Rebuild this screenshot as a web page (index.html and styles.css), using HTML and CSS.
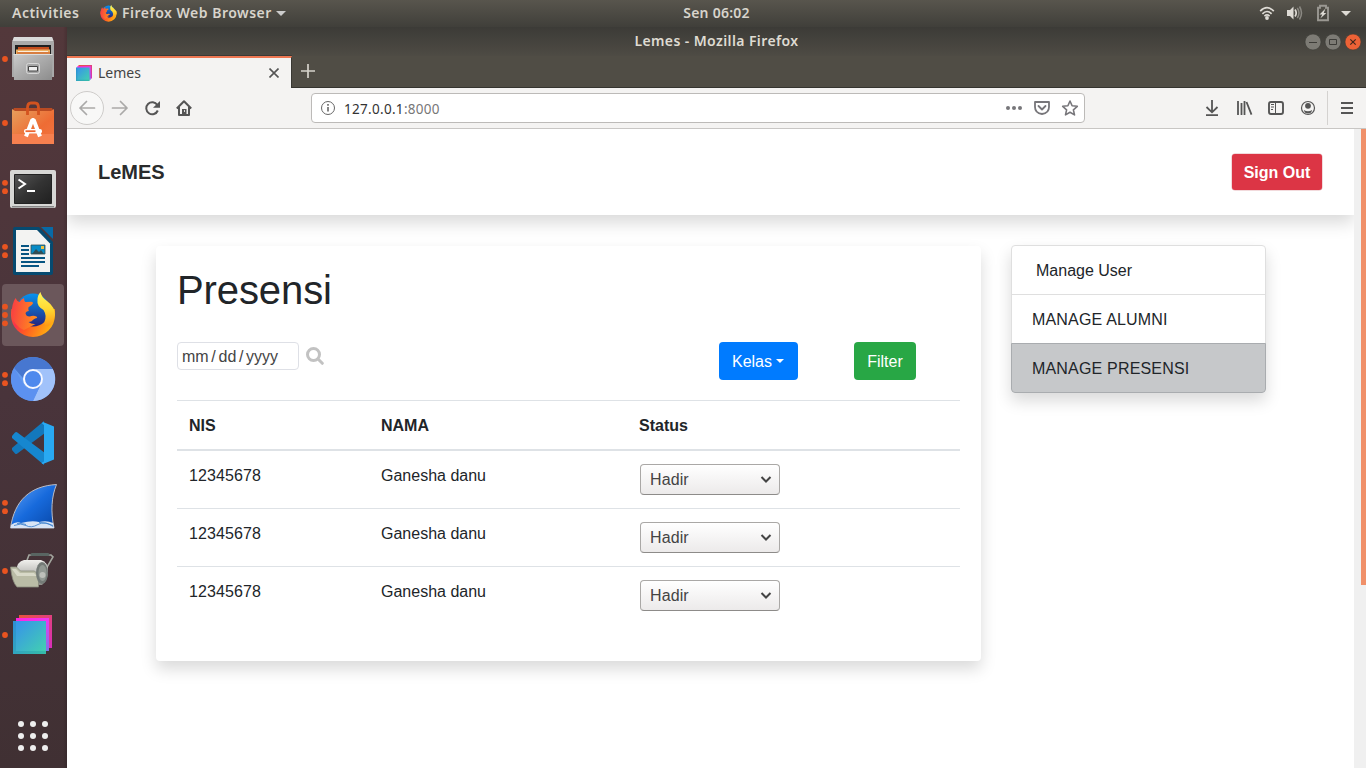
FILE: index.html
```html
<!DOCTYPE html>
<html lang="en">
<head>
<meta charset="utf-8">
<title>Lemes</title>
<link rel="stylesheet" href="styles.css">
</head>
<body>
<svg class="defs" width="0" height="0">
  <defs>
    <linearGradient id="blue" x2="1" y2="1"><stop offset="0" stop-color="#368fee"/><stop offset="1" stop-color="#43d3ad"/></linearGradient>
    <linearGradient id="pink" x2="1" y2="1"><stop offset="0" stop-color="#ff24dc"/><stop offset=".5" stop-color="#ee38f2"/><stop offset="1" stop-color="#7479e9"/></linearGradient>
    <linearGradient id="red" x2="1" y2="1"><stop offset="0" stop-color="#e8543c"/><stop offset="1" stop-color="#d92dbd"/></linearGradient>
    <linearGradient id="steel" x2="1" y2="1"><stop offset="0" stop-color="#ccc"/><stop offset=".4" stop-color="#b0b0b0"/><stop offset="1" stop-color="#8c8c8c"/></linearGradient>
    <linearGradient id="bag" x2="1" y2="1"><stop offset="0" stop-color="#e7a05d"/><stop offset=".6" stop-color="#ee6c34"/><stop offset="1" stop-color="#f37543"/></linearGradient>
    <linearGradient id="term" x2="1" y2="1"><stop offset="0" stop-color="#555"/><stop offset=".5" stop-color="#333"/><stop offset="1" stop-color="#202020"/></linearGradient>
    <linearGradient id="fin" x2="1" y2="1"><stop offset="0" stop-color="#62a2f5"/><stop offset=".5" stop-color="#176adc"/><stop offset="1" stop-color="#0746a6"/></linearGradient>
    <linearGradient id="fox" x1="0" y1="0" x2="1" y2=".3"><stop offset="0" stop-color="#ff5a2c"/><stop offset=".25" stop-color="#f8324a"/><stop offset=".5" stop-color="#ff5a24"/><stop offset="1" stop-color="#ffad10"/></linearGradient>
    <linearGradient id="head" x1="0" y1="0" x2="1" y2=".2"><stop offset="0" stop-color="#f83a45"/><stop offset="1" stop-color="#ff8a1e"/></linearGradient>
    <linearGradient id="flame" x2="0" y2="1"><stop offset="0" stop-color="#fff45a"/><stop offset=".5" stop-color="#ffd832"/><stop offset="1" stop-color="#ff9712"/></linearGradient>
    <linearGradient id="globe" x2="0" y2="1"><stop offset="0" stop-color="#0793ef"/><stop offset="1" stop-color="#24237c"/></linearGradient>
    <linearGradient id="drum" x2="0" y2="1"><stop offset="0" stop-color="#f0f0ed"/><stop offset="1" stop-color="#8f8f8a"/></linearGradient>
    <symbol id="firefox" viewBox="10 292 46 46">
      <path fill="url(#fox)" d="M11.500 309h43.300q.4 3 .2 6a22 22 0 0 1-44 0q0-3 .5-6Z"/>
      <circle cx="33" cy="310" r="16.500" fill="url(#globe)"/>
      <path fill="url(#head)" d="M15.500 298q1.500 3.500 4 4 1.500-3 4.500-4 0 3 1.500 4l6-.3q1.500.3 1.500 1.500-.5 2-4.500 4-.5 2 .3 3.800-2.300 0-3.300 2 .5 3.500 4 3.500 4-1.500 7 0 1 1 .5 1.500-2 0-3.500 1.500-2 2.500-5 2.500 3 2.500 7 2L24 330q-10-4-12.500-15 0-11 4-17Z"/>
      <path fill="url(#flame)" d="M40.500 292q.5 4.500 6.500 9 8 6 8 14-1.500 8-7 11.500-4-1-3.500-5 2.500-6-1-11.500-7-4-6-10 0-5 3-8Z"/>
    </symbol>
    <symbol id="squares" viewBox="13 615 39 39">
      <path fill="url(#red)" d="M19 615h33v33H19z"/><path fill="url(#pink)" d="M16 618h33v33H16z"/><path fill="url(#blue)" d="M13 621h33v33H13z"/><path fill="#178aa0" opacity=".3" d="M13 621h3v30h30v3H13z"/>
    </symbol>
  </defs>
</svg>
<div class="desktop">
  <header class="topbar">
    <div class="topbar-left">
      <span class="activities">Activities</span>
      <svg class="app-icon" width="17" height="17"><use href="#firefox"/></svg>
      <span class="app-name">Firefox Web Browser</span>
      <svg class="caret" width="10" height="5"><path d="M0 0h10L5 5z" fill="#ccc"/></svg>
    </div>
    <div class="clock">Sen 06:02</div>
    <div class="indicators">
      <svg width="110" height="27" viewBox="1256 0 110 27" fill="none" stroke="#dedbd5">
        <path d="M1260.2 11.2q6.800-7 13.600 0M1262.400 13.800q4.600-4.600 9.200 0" stroke-width="1.700"/><path d="M1264.400 16.100q2.600-2.400 5.200 0" stroke-width="1.500"/><circle cx="1267" cy="18" r="1.900" fill="#dedbd5" stroke="none"/>
        <path fill="#dedbd5" stroke="none" d="M1287 10h3l3.500-3.500v13l-3.500-3.500h-3z"/><path d="M1295 9.500q2.400 3.500 0 7" stroke-width="1.700"/><path stroke="#8b8983" stroke-width="1.500" d="M1297.300 8q3.400 5 0 10M1299.500 6.500q4 6.500 0 13"/>
        <path stroke="#9a9892" stroke-width="1.900" d="M1318 7.800h2v-2h6v2h2v12.400h-10z"/><path fill="#dedbd5" stroke="none" d="m1325.500 8.500-6 6h2.800l-2 4 6-5.500h-2.600z"/>
        <path fill="#dedbd5" stroke="none" d="M1341 11h10l-5 5z"/>
      </svg>
    </div>
  </header>
  <div class="workspace">
    <nav class="dock">
      <div class="dock-item"><svg viewBox="0 27 67 64"><path fill="#aaa" d="M14 37h38l2 5v35H12V42z"/><path fill="#dadada" d="M14 37h38l1.500 4h-41z"/><path fill="#202020" d="M15 45h36v10H15z"/><path fill="#c44d1d" d="M18 47h31v3H18z"/><path fill="#ecb064" d="M16 49.500h34V54H16z"/><path stroke="#fbeedc" d="M18 51.500h30"/><path stroke="#c44d1d" d="M17 53h33"/><path fill="url(#steel)" d="M13.500 54h39l-.5 26H14z"/><path stroke="#ddd" d="M13.500 54.500h39"/><rect x="26.500" y="63.500" width="13" height="10" rx="2" fill="#a5a5a5" stroke="#d8d8d8"/><path fill="#eee" stroke="#444" d="M28.500 66.500h9v4.500h-9z"/><circle class="dot" cx="5" cy="59" r="2.900"/></svg></div>
      <div class="dock-item"><svg viewBox="0 91 67 64"><path fill="#b94b23" d="m12 112 2-4h38l2 4z"/><path fill="url(#bag)" d="M12 109l3 2h36l3-2v35H12z"/><path fill="#f6804f" d="M12 134h42v10H12z"/><path fill="none" stroke="#d4531f" stroke-width="2.800" d="M27.500 115v-7q0-5 3.500-5h4q3.500 0 3.500 5v7"/><path fill="none" stroke="#fff" stroke-width="4" stroke-linejoin="bevel" d="m26 136.500 6.300-16.500h1.400l6.300 16.500"/><rect x="24" y="129" width="18" height="4.500" rx="2" fill="#fff"/><path stroke="#ed6530" stroke-width="1.800" d="M25.500 131.200h10"/><circle class="dot" cx="5" cy="123" r="2.900"/></svg></div>
      <div class="dock-item"><svg viewBox="0 155 67 64"><rect x="10" y="170" width="46" height="38" rx="2" fill="#d7d7d5"/><path fill="#888" d="M12 206h42v1.500H12z"/><path fill="url(#term)" stroke="#222" d="M14.500 174.500h37v29h-37z"/><path fill="none" stroke="#fff" stroke-width="2" d="m18.500 179.500 6.500 4.500-6.500 4.500m8.500 2.500h8"/><circle class="dot" cx="5" cy="182.800" r="2.900"/><circle class="dot" cx="5" cy="191.200" r="2.900"/></svg></div>
      <div class="dock-item"><svg viewBox="0 219 67 64"><path fill="#064a70" d="M15 227h24l14 15v31q0 2-2 2H15q-2 0-2-2v-44q0-2 2-2z"/><path fill="#f3f3f2" d="M16 230h21l13 13.500V272H16z"/><path fill="#086aa6" d="M41 227h12v12z"/><path stroke="#075582" stroke-width="2" d="M21 246h8m-8 4h8m-8 4h8m-8 4h24m-24 4h24m-24 4h18"/><path fill="#078bc6" stroke="#334e54" stroke-width=".8" d="M31 245h14v9H31z"/><path fill="#f5c13e" d="M41 246h3v3h-3z"/><path fill="#334e54" d="m32 254 4-5 3 3 2-2 3 4z"/><circle class="dot" cx="5" cy="246.800" r="2.900"/><circle class="dot" cx="5" cy="255.200" r="2.900"/></svg></div>
      <div class="dock-item active"><svg viewBox="0 283 67 64"><use href="#firefox" x="10" y="292" width="46" height="46"/><circle class="dot" cx="5" cy="306.700" r="2.900"/><circle class="dot" cx="5" cy="315" r="2.900"/><circle class="dot" cx="5" cy="323.300" r="2.900"/></svg></div>
      <div class="dock-item"><svg viewBox="0 347 67 64"><circle cx="33" cy="379" r="22" fill="#659cf0"/><path fill="#4777d0" d="M14 368a22 22 0 0 1 38 0l.8 1H33a10 10 0 0 0-10 9z"/><path fill="#a1c2fa" d="M34 369h18.800A22 22 0 0 1 33 401l8-17a10 10 0 0 0-7-15z"/><path fill="#5c91f0" d="M14 368l9 15a10 10 0 0 0 18 1l-8 17a22 22 0 0 1-19-33z"/><circle cx="33" cy="379" r="9" fill="#4f89ed" stroke="#f7f8ff" stroke-width="2"/><circle class="dot" cx="5" cy="374.800" r="2.900"/><circle class="dot" cx="5" cy="383.200" r="2.900"/></svg></div>
      <div class="dock-item"><svg viewBox="0 411 67 64"><path fill="#1378bc" d="m12 450 3 3.500q1 1 2 .2l27-20V421L12 448z"/><path fill="#1687cf" d="m12 436 3-3.500q1-1 2-.2l27 20V465L12 438z"/><path fill="#29a9f2" d="m43 422 11 4.500v33L43 464q-2-.5-1-1.500l2-1V425l-2-1.500z"/></svg></div>
      <div class="dock-item"><svg viewBox="0 475 67 64"><path fill="url(#fin)" stroke="#bcbdc6" d="M10.500 528c4-28 20-42 46-43.500-5 12-6 27-2.500 43.500z"/><path fill="#d7e4f6" d="M11 525q5-4 10-2 11-3 18-1 8-2 14 1l1 5H11z"/><path stroke="#337bcc" stroke-width=".8" fill="none" d="M14 525.500q7-3 12 0t12-1 15 2M17 523.500q7 0 9 1m13-2q8 0 14 3"/><circle class="dot" cx="5" cy="502.800" r="2.900"/><circle class="dot" cx="5" cy="511.200" r="2.900"/></svg></div>
      <div class="dock-item"><svg viewBox="0 539 67 64"><path fill="none" stroke="#a3a69e" stroke-width="1.600" d="m24 568 5-13h22l2 2-10 17"/><path stroke="#596562" stroke-width="3" stroke-linecap="round" d="M32 554.500h16"/><path fill="url(#drum)" d="M16 572q1-11 8-12h17q7 2 7 11t-6 14H20z"/><path fill="#babca6" stroke="#888a7b" stroke-width=".8" d="M10.500 567h6l4 4h14l4 4v12H17q-5-5-6.500-20z"/><path fill="#d8d9c8" d="M12 569h4l4 4h14l3 3H17z"/><ellipse cx="42" cy="573" rx="6" ry="11" fill="#747b77"/><ellipse cx="42.500" cy="573" rx="4" ry="8" fill="#929993"/><circle cx="42.500" cy="575" r="3" fill="#bdc0ba"/><circle class="dot" cx="5" cy="571" r="2.900"/></svg></div>
      <div class="dock-item"><svg viewBox="0 603 67 64"><use href="#squares" x="13" y="615" width="39" height="39"/><circle class="dot" cx="5" cy="635" r="2.900"/></svg></div>
      <div class="show-apps"><i></i><i></i><i></i><i></i><i></i><i></i><i></i><i></i><i></i></div>
    </nav>
    <main class="browser">
      <div class="titlebar">
        <div class="window-title">Lemes - Mozilla Firefox</div>
        <svg class="window-buttons" width="58" height="18" viewBox="1304 32 58 18">
          <circle cx="1313" cy="41" r="8" fill="#7d7b75" stroke="#3b3a36" stroke-width=".6"/><circle cx="1333" cy="41" r="8" fill="#7d7b75" stroke="#3b3a36" stroke-width=".6"/><circle cx="1353" cy="41" r="8" fill="#ed6236" stroke="#443a32" stroke-width=".6"/>
          <path fill="none" stroke="#3d3c38" d="M1309 41.500h8m12.500-3h7v5h-7z"/><path stroke="#40271d" stroke-width="1.200" d="m1350.300 38.300 5.400 5.400m0-5.400-5.400 5.400"/>
        </svg>
      </div>
      <div class="tabs">
        <div class="tab"><svg width="16" height="16"><use href="#squares"/></svg><span>Lemes</span><svg class="tab-close" width="10" height="10"><path stroke="#555" stroke-width="1.600" d="m.5.500 9 9m0-9-9 9"/></svg></div>
        <svg class="new-tab" width="14" height="14"><path stroke="#d5d2ca" stroke-width="1.700" d="M0 7h14M7 0v14"/></svg>
      </div>
      <div class="toolbar">
        <svg width="132" height="40" viewBox="67 88 132 40" fill="none" stroke="#555" stroke-width="2">
          <circle cx="87" cy="108" r="16.500" fill="#f8f8f7" stroke="#ceccca" stroke-width="1"/>
          <path stroke="#aaa9a8" stroke-width="1.700" stroke-linecap="round" stroke-linejoin="round" d="M94.500 108H80m6.500-6.500L80 108l6.500 6.500M112.500 108H127m-6.500-6.500 6.500 6.500-6.500 6.500"/>
          <path d="M157.300 105a6 6 0 1 0 .5 5.500"/><path fill="#555" stroke="none" d="M160 101v6.800h-7z"/>
          <path stroke-linejoin="round" d="m176.800 108.500 7.200-7.300 7.200 7.300M179 107v8h10v-8"/><path stroke="none" fill="#555" d="M182 109h4.500v6H182z"/><path stroke="none" fill="#ddd" d="M184 110h1v2h-1z"/>
        </svg>
        <div class="urlbar">
          <svg width="16" height="16" fill="none" stroke="#666"><circle cx="8" cy="8" r="6.500"/><path stroke-width="1.600" d="M8 7v4.500M8 4v1.700"/></svg>
          <span class="url">127.0.0.1<span class="port">:8000</span></span>
          <svg class="url-actions" width="80" height="28" viewBox="1002 94 80 28" fill="none" stroke="#77767a" stroke-width="1.800"><g fill="#77767a" stroke="none"><circle cx="1008" cy="108" r="2"/><circle cx="1014" cy="108" r="2"/><circle cx="1020" cy="108" r="2"/></g><path stroke-linejoin="round" d="M1035 102h14v5q0 6-7 7-7-1-7-7z"/><path stroke-linecap="round" stroke-linejoin="round" d="m1038.500 106 3.500 3.500 3.500-3.500"/><path stroke-width="1.600" stroke-linejoin="round" d="m1070 101 2.100 4.800 5.200.5-3.900 3.500 1.100 5.100-4.500-2.700-4.500 2.700 1.100-5.100-3.900-3.500 5.200-.5z"/></svg>
        </div>
        <svg class="toolbar-actions" width="170" height="40" viewBox="1196 88 170 40" fill="none" stroke="#555" stroke-width="2">
          <path stroke-width="1.800" d="M1212 100v12m-5.500-5 5.500 5.300 5.500-5.300M1206 115.200h12"/>
          <path d="M1238 101v14m3.500-12v12m3-14v14m2-13 5 12.700" stroke-width="1.800"/>
          <rect x="1269" y="102" width="14" height="12" rx="2" stroke-width="1.900"/><path stroke-width="1" d="M1275.500 102v12M1271 104.500h3m-3 2.500h3m-3 2.500h2"/>
          <circle cx="1308" cy="108" r="6.500" stroke-width="1.200"/><circle cx="1308" cy="105.800" r="2.900" fill="#555" stroke="none"/><path d="M1303.800 110q4.200 2.500 8.400 0-.8 3.500-4.200 3.500t-4.200-3.500z" fill="#555" stroke="none"/>
          <path stroke="#d4d2d0" stroke-width="1" d="M1327.500 91v34"/><path d="M1341 103h12m-12 5h12m-12 5h12"/>
        </svg>
      </div>
      <div class="viewport">
        <div class="page">
          <header class="site-header"><strong class="brand">LeMES</strong><button class="btn sign-out">Sign Out</button></header>
          <div class="content">
            <section class="card">
              <h1>Presensi</h1>
              <div class="filters">
                <div class="date"><span>mm</span><span>/</span><span>dd</span><span>/</span><span>yyyy</span></div>
                <svg class="search" width="18" height="18" fill="none" stroke="#c2c2c2" stroke-width="3"><circle cx="7.500" cy="7.500" r="6"/><path stroke-linecap="round" d="m12 12 4.300 4.300"/></svg>
                <button class="btn kelas">Kelas<i class="btn-caret"></i></button>
                <button class="btn filter">Filter</button>
              </div>
              <div class="table">
                <div class="row head"><b>NIS</b><b>NAMA</b><b>Status</b></div>
                <div class="row"><span>12345678</span><span>Ganesha danu</span><div class="select">Hadir<svg width="12" height="8"><path d="m1.500 1 4.500 4.500 4.500-4.500"/></svg></div></div>
                <div class="row"><span>12345678</span><span>Ganesha danu</span><div class="select">Hadir<svg width="12" height="8"><path d="m1.500 1 4.500 4.500 4.500-4.500"/></svg></div></div>
                <div class="row"><span>12345678</span><span>Ganesha danu</span><div class="select">Hadir<svg width="12" height="8"><path d="m1.500 1 4.500 4.500 4.500-4.500"/></svg></div></div>
              </div>
            </section>
            <aside class="menu"><a class="menu-user">Manage User</a><a>MANAGE ALUMNI</a><a class="selected">MANAGE PRESENSI</a></aside>
          </div>
        </div>
        <div class="scrollbar"><div class="thumb"></div></div>
      </div>
    </main>
  </div>
</div>
</body>
</html>
```
FILE: styles.css
```css
* { box-sizing: border-box; }
body { margin: 0; overflow: hidden; font-family: "Noto Sans", "Open Sans", sans-serif; }
svg { display: block; flex: none; }
.defs { position: absolute; }
.desktop { width: 1366px; height: 768px; display: flex; flex-direction: column; }
.topbar { height: 27px; display: grid; grid-template-columns: 1fr 80px 1fr; align-items: center; background: linear-gradient(#58554d, #403f3a); color: #d8d4cc; font-size: 14px; font-weight: 600; line-height: 25px; letter-spacing: .5px; white-space: nowrap; }
.topbar-left { display: flex; align-items: center; padding-left: 12px; }
.activities { width: 88px; padding-bottom: 2px; }
.app-name { margin-left: 5px; width: 154px; padding-bottom: 2px; }
.clock { text-align: center; width: 147px; padding-bottom: 2px; letter-spacing: .25px; }
.indicators { justify-self: end; }
.workspace { display: flex; flex: 1; min-height: 0; }
.dock { width: 67px; display: flex; flex-direction: column; background: linear-gradient(90deg, transparent 63px, #0002), linear-gradient(#53383b, #49343b 50%, #403033); }
.dock-item { height: 64px; position: relative; flex: none; }
.dock-item svg { width: 67px; height: 64px; position: relative; }
.dock-item.active::before { content: ""; position: absolute; left: 2px; top: 1px; width: 62px; height: 62px; border-radius: 4px; background: #6b575b; }
.dot { fill: #e95420; }
.show-apps { display: grid; grid-template-columns: repeat(3, 6px); gap: 6px; margin: 54px 0 0 18px; }
.show-apps i { width: 6px; height: 6px; border-radius: 50%; background: #eee; }
.browser { flex: 1; min-width: 0; display: flex; flex-direction: column; }
.titlebar { height: 29px; display: flex; align-items: center; background: linear-gradient(#3c3b37, #4e4b44); color: #dfdbd2; font-size: 14px; font-weight: 600; letter-spacing: .4px; }
.window-title { flex: 1; text-align: center; padding: 0 0 2px 62px; }
.window-buttons { margin-right: 4px; }
.tabs { height: 32px; display: flex; background: #504d45; border-bottom: 1px solid #35342f; }
.tab { width: 225px; height: 32px; display: flex; align-items: center; padding: 0 12px 0 9px; background: #f4f3f2; border-top: 2px solid #ee7752; border-right: 1px solid #393833; font-size: 14px; color: #444; box-shadow: 0 -1px #3b3a36; }
.tab span { margin: -2px 0 0 6px; flex: 1; }
.new-tab { margin: 8px 0 0 9px; }
.toolbar { height: 41px; display: flex; background: #f4f3f2; border-bottom: 1px solid #c8c6c4; }
.urlbar { width: 774px; height: 30px; margin: 5px 111px 0 112px; display: flex; align-items: center; padding-left: 8px; background: #fff; border: 1px solid #bcbab8; border-radius: 4px; font-size: 13.500px; letter-spacing: .3px; color: #333; }
.url { flex: 1; margin-left: 8px; padding-top: 2px; }
.port { color: #777; }
.url-actions { margin-right: 2px; }
.viewport { flex: 1; min-height: 0; display: flex; font-family: "Liberation Sans", Arial, sans-serif; font-size: 16px; line-height: 24px; color: #212529; }
.page { flex: 1; background: #fff; overflow: hidden; }
.scrollbar { width: 12px; background: #f0f0f0; padding-left: 7px; }
.thumb { height: 456px; background: #f09069; }
.site-header { height: 86px; display: flex; align-items: center; justify-content: space-between; padding: 0 32px 0 31px; background: #fff; box-shadow: 0 8px 16px rgba(0,0,0,.15); }
.brand { font-size: 20px; color: #292b2c; }
.btn { font: inherit; color: #fff; height: 38px; border: 0; border-radius: 4px; padding: 2px 0 0; display: flex; align-items: center; justify-content: center; }
.sign-out { width: 90px; height: 36px; background: #dc3545; border-radius: 3px; font-weight: bold; box-shadow: 0 0 0 .5px #e5b5ba; }
.content { display: flex; align-items: flex-start; padding: 30px 0 0 89px; }
.card { width: 825px; height: 415px; margin-top: 1px; padding: 20px 21px; background: #fff; border-radius: 4px; box-shadow: 0 8px 16px rgba(0,0,0,.15); }
h1 { margin: 0; font-size: 40px; line-height: 48px; font-weight: 400; letter-spacing: -.1px; }
.filters { display: flex; height: 86px; padding-top: 28px; align-items: flex-start; }
.date { width: 122px; height: 28px; display: flex; gap: 2.700px; padding: 2px 4px 0; border: 1px solid #dee0e6; border-radius: 4px; color: #444; }
.search { margin: 5px 0 0 7px; }
.kelas { width: 79px; margin-left: 395px; padding-right: 1px; background: #007bff; }
.btn-caret { margin: -3px 0 0 4px; border: 4px solid transparent; border-top-color: #fff; border-bottom: 0; }
.filter { width: 62px; margin-left: 56px; background: #28a745; }
.row { height: 58px; display: grid; grid-template-columns: 192px 258px 1fr; align-items: start; padding: 12px 0 0 12px; border-top: 1px solid #dee2e6; }
.row > span, .row > b { padding-top: 1px; }
.row > span:first-child { letter-spacing: .1px; }
.row.head { height: 49px; }
.row.head + .row { border-top: 2px solid #dee2e6; height: 59px; }
.select { width: 140px; height: 31px; margin: 1px 0 0 1px; display: flex; align-items: center; justify-content: space-between; padding: 0 7px 0 9px; border: 1px solid #aaa8a6; border-bottom-color: #8d8b89; border-radius: 4px; background: linear-gradient(#fff, #eceaea); color: #444; letter-spacing: .1px; }
.select svg { fill: none; stroke: #444; stroke-width: 2; }
.menu { width: 255px; margin-left: 30px; border-radius: 4px; box-shadow: 0 8px 16px rgba(0,0,0,.15); }
.menu a { display: block; height: 50px; padding: 13px 20px 0; border: 1px solid #dfdfdf; background: #fff; letter-spacing: .18px; }
.menu a + a { margin-top: -1px; }
.menu a:first-child { border-radius: 4px 4px 0 0; padding-left: 24px; letter-spacing: 0; }
.menu .selected { position: relative; background: #c6c8ca; border-color: #a9acaf; border-radius: 0 0 4px 4px; }
```
